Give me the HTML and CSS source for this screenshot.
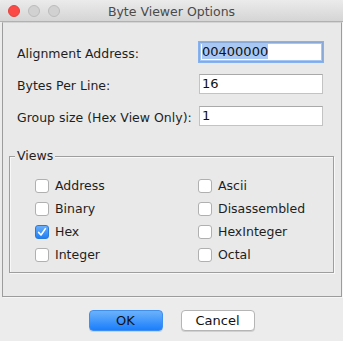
FILE: index.html
```html
<!DOCTYPE html>
<html>
<head>
<meta charset="utf-8">
<link rel="stylesheet" href="styles.css">
</head>
<body>
<div class="window">
  <div class="titlebar">
    <div class="lights">
      <span class="light red"></span>
      <span class="light gray"></span>
      <span class="light gray"></span>
    </div>
    <div class="title">Byte Viewer Options</div>
  </div>
  <div class="panel">
    <div class="form">
      <label class="lbl">Alignment Address:</label>
      <div class="field focus"><span class="sel">00400000</span></div>
      <label class="lbl">Bytes Per Line:</label>
      <div class="field">16</div>
      <label class="lbl">Group size (Hex View Only):</label>
      <div class="field">1</div>
    </div>
    <div class="views">
      <span class="legend">Views</span>
      <div class="grid">
        <div class="opt"><span class="cb"></span>Address</div>
        <div class="opt"><span class="cb"></span>Ascii</div>
        <div class="opt"><span class="cb"></span>Binary</div>
        <div class="opt"><span class="cb"></span>Disassembled</div>
        <div class="opt"><span class="cb on"><svg viewBox="0 0 14 14" width="14" height="14"><path d="M3.6 7.4 L6 10 L10.4 3.6" fill="none" stroke="#fff" stroke-width="1.6" stroke-linecap="round" stroke-linejoin="round"/></svg></span>Hex</div>
        <div class="opt"><span class="cb"></span>HexInteger</div>
        <div class="opt"><span class="cb"></span>Integer</div>
        <div class="opt"><span class="cb"></span>Octal</div>
      </div>
    </div>
  </div>
  <div class="buttons">
    <button class="btn ok">OK</button>
    <button class="btn">Cancel</button>
  </div>
</div>
</body>
</html>
```
FILE: styles.css
```css
html, body {
  margin: 0;
  padding: 0;
  background: #ececec;
}
.window {
  width: 343px;
  height: 341px;
  background: #ececec;
  font-family: "DejaVu Sans", "Liberation Sans", sans-serif;
  font-size: 12.5px;
  color: #1e1e1e;
  overflow: hidden;
  border-radius: 4px 4px 0 0;
}
.titlebar {
  height: 21px;
  border-bottom: 1px solid #b1b1b1;
  background: linear-gradient(#ebebeb, #d5d5d5);
  display: flex;
  align-items: center;
  position: relative;
}
.lights {
  display: flex;
  gap: 8px;
  padding-left: 8px;
  padding-top: 1px;
}
.light {
  width: 12px;
  height: 12px;
  border-radius: 50%;
  box-sizing: border-box;
  display: block;
}
.light.red {
  background: #fc4a46;
  border: 1px solid #e0443e;
}
.light.gray {
  background: #d1d1d1;
  border: 1px solid #bcbcbc;
}
.title {
  position: absolute;
  left: 0;
  right: 0;
  top: 1px;
  height: 21px;
  line-height: 21px;
  text-align: center;
  font-size: 12.5px;
  color: #4a4a4a;
  pointer-events: none;
}
.panel {
  margin: 0 1px 0 2px;
  height: 275px;
  border: 1px solid #9c9c9c;
  border-top: 1px solid #d4d4d4;
  box-sizing: border-box;
  background: #e9e9e9;
  padding: 19px 6px 0 6px;
  box-shadow: 1px 1px 0 #f6f6f6;
}
.form {
  display: grid;
  grid-template-columns: 182px 124px;
  grid-template-rows: 20px 20px 20px;
  row-gap: 12px;
  align-items: center;
  padding-left: 8px;
}
.form .lbl {
  padding-top: 2px;
}
.lbl {
  white-space: nowrap;
}
.field {
  height: 20px;
  box-sizing: border-box;
  background: #fff;
  border: 1px solid #c3c3c3;
  border-top-color: #a9a9a9;
  line-height: 18px;
  padding-left: 2px;
  font-size: 13px;
  color: #111;
}
.field.focus {
  border: 1px solid #8aa9d6;
  box-shadow: 0 0 0 1px #86b2ef, inset 0 0 0 1px #a6c6f3;
  padding-left: 2px;
}
.sel {
  background: #a9c9f4;
}
.views {
  position: relative;
  margin-top: 30px;
  width: 325px;
  height: 117px;
  box-sizing: border-box;
  border: 1px solid #9e9e9e;
  box-shadow: 1px 1px 0 #f8f8f8, inset 1px 1px 0 #f8f8f8;
  padding: 17px 0 0 25px;
}
.legend {
  position: absolute;
  top: -9px;
  left: 5px;
  padding: 0 2px;
  background: #e9e9e9;
  line-height: 16px;
  font-size: 12.5px;
  color: #1e1e1e;
}
.grid {
  display: grid;
  grid-template-columns: 163px 130px;
  grid-auto-rows: 23px;
}
.opt {
  display: flex;
  align-items: center;
  gap: 6px;
  white-space: nowrap;
}
.cb {
  width: 14px;
  height: 14px;
  box-sizing: border-box;
  border: 1px solid #b0b0b0;
  border-radius: 3px;
  background: #fff;
  display: block;
  flex: none;
}
.cb svg {
  display: block;
  margin: -1px;
}
.cb.on {
  background: linear-gradient(#69aefb, #1e80f4);
  border-color: #2b79db;
}
.buttons {
  display: flex;
  justify-content: center;
  gap: 18px;
  padding-top: 13px;
}
.btn {
  width: 74px;
  height: 21px;
  box-sizing: border-box;
  font-family: "DejaVu Sans", "Liberation Sans", sans-serif;
  font-size: 13px;
  color: #111;
  background: #fff;
  border: 1px solid #b5b5b5;
  border-radius: 4px;
  padding: 0;
  box-shadow: 0 1px 0 #d0d0d0;
}
.btn.ok {
  background: linear-gradient(#6cb2fc, #1a7ffb);
  border-color: #3f8ef2;
}
```
